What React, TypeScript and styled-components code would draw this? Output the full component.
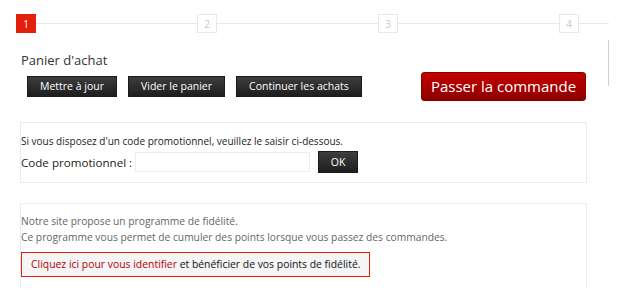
import React from "react";
import styled, { createGlobalStyle } from "styled-components";

const Global = createGlobalStyle`
  html, body { margin: 0; padding: 0; background: #fff; }
  body { font-family: "Open Sans", "DejaVu Sans", sans-serif; color: #333; }
  * { box-sizing: border-box; }
`;

const Page = styled.div`
  position: relative;
  width: 617px;
  height: 298px;
  overflow: hidden;
`;

const ScrollMark = styled.div`
  position: absolute;
  left: 608px;
  top: 40px;
  width: 1px;
  height: 46px;
  background: #cfcfcf;
`;

const Stepper = styled.div`
  display: flex;
  margin: 14px 0 0 16px;
  width: 593px;
  height: 19px;
  overflow: hidden;
`;

const Step = styled.div`
  flex: 0 0 181px;
  display: flex;
  align-items: center;
`;

const StepBox = styled.div<{ $active?: boolean }>`
  flex: 0 0 20px;
  height: 19px;
  display: flex;
  align-items: center;
  justify-content: center;
  font-size: 10px;
  line-height: 1;
  border: 1px solid ${(p) => (p.$active ? "#e2200b" : "#e8e8e8")};
  background: ${(p) => (p.$active ? "#e2200b" : "#fff")};
  color: ${(p) => (p.$active ? "#fff" : "#c8c8c8")};
`;

const StepLine = styled.div`
  flex: 1;
  height: 1px;
  background: #e8e8e8;
`;

const Title = styled.h1`
  margin: 18px 0 0 21px;
  font-size: 13px;
  line-height: 18px;
  font-weight: 400;
  color: #333;
`;

const Actions = styled.div`
  display: flex;
  align-items: flex-start;
  margin-top: 3px;
  padding: 0 31px 0 27px;
`;

const DarkButton = styled.button<{ $gap?: number }>`
  margin-top: 4px;
  margin-left: ${(p) => p.$gap ?? 0}px;
  height: 21px;
  padding: 0 12px;
  border: 1px solid #1a1a1a;
  background: linear-gradient(#3d3d3d, #1e1e1e);
  color: #fff;
  font-family: inherit;
  font-size: 10.5px;
  line-height: 19px;
  cursor: pointer;
`;

const OrderButton = styled.button`
  margin-left: auto;
  width: 165px;
  height: 29px;
  border: 1px solid #8a0000;
  border-radius: 3px;
  background: linear-gradient(#c40000, #8c0000);
  color: #fff;
  font-family: inherit;
  font-size: 15px;
  line-height: 27px;
  padding: 0;
  cursor: pointer;
`;

const Panel = styled.div<{ $top: number; $open?: boolean }>`
  margin: ${(p) => p.$top}px 0 0 20px;
  width: 567px;
  border: 1px solid #ebebeb;
  border-bottom: ${(p) => (p.$open ? "none" : "1px solid #ebebeb")};
  padding: ${(p) => (p.$open ? "9px 0 11px 0" : "11px 0 9px 0")};
`;

const PromoText = styled.div`
  font-size: 10px;
  line-height: 14px;
  color: #222;
`;

const CodeRow = styled.div`
  display: flex;
  align-items: center;
  margin-top: 3px;
  height: 22px;
`;

const CodeLabel = styled.label`
  font-size: 11.6px;
  color: #222;
  margin-right: 3px;
`;

const CodeInput = styled.input`
  width: 175px;
  height: 20px;
  border: 1px solid #ececec;
  margin: 0 8px 0 0;
  padding: 0 4px;
  font-family: inherit;
`;

const OkButton = styled(DarkButton)`
  margin-top: 0;
  width: 40px;
  height: 22px;
  padding: 0;
`;

const Info = styled.p`
  margin: 0;
  font-size: 10.25px;
  line-height: 16px;
  color: #666;
`;

const LoginBox = styled.div`
  display: inline-block;
  margin-top: 7px;
  height: 25px;
  padding: 0 9px;
  border: 1px solid #e2200b;
  background: #f5f5f5;
  font-size: 10.4px;
  line-height: 23px;
  color: #111;
`;

const LoginLink = styled.a`
  color: #b30000;
  text-decoration: none;
`;

export default function App() {
  return (
    <Page>
      <Global />
      <ScrollMark />
      <Stepper>
        {[1, 2, 3, 4].map((n) => (
          <Step key={n}>
            <StepBox $active={n === 1}>{n}</StepBox>
            <StepLine />
          </Step>
        ))}
      </Stepper>
      <Title>Panier d'achat</Title>
      <Actions>
        <DarkButton>Mettre à jour</DarkButton>
        <DarkButton $gap={11}>Vider le panier</DarkButton>
        <DarkButton $gap={11}>Continuer les achats</DarkButton>
        <OrderButton>Passer la commande</OrderButton>
      </Actions>
      <Panel $top={21}>
        <PromoText>Si vous disposez d'un code promotionnel, veuillez le saisir ci-dessous.</PromoText>
        <CodeRow>
          <CodeLabel>Code promotionnel :</CodeLabel>
          <CodeInput type="text" />
          <OkButton>OK</OkButton>
        </CodeRow>
      </Panel>
      <Panel $top={20} $open>
        <Info>Notre site propose un programme de fidélité.</Info>
        <Info>Ce programme vous permet de cumuler des points lorsque vous passez des commandes.</Info>
        <LoginBox>
          <LoginLink href="#">Cliquez ici pour vous identifier</LoginLink> et bénéficier de vos points de fidélité.
        </LoginBox>
      </Panel>
    </Page>
  );
}
